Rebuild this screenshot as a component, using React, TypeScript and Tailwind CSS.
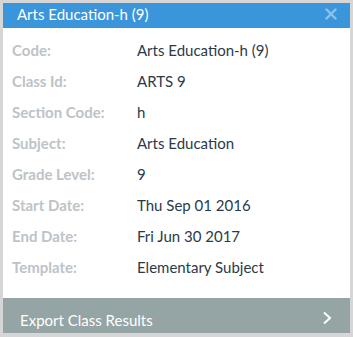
import React from "react";

const rows: [string, string][] = [
  ["Code:", "Arts Education-h (9)"],
  ["Class Id:", "ARTS 9"],
  ["Section Code:", "h"],
  ["Subject:", "Arts Education"],
  ["Grade Level:", "9"],
  ["Start Date:", "Thu Sep 01 2016"],
  ["End Date:", "Fri Jun 30 2017"],
  ["Template:", "Elementary Subject"],
];

export default function App() {
  return (
    <div
      className="w-[353px] h-[337px] bg-[#d6d6d6] pt-[3px] pl-[3px] pr-[3px] pb-[4px]"
      style={{ fontFamily: "Lato, 'Open Sans', sans-serif" }}
    >
      <div className="flex h-full flex-col bg-white">
        {/* Header */}
        <div className="flex h-[25px] items-center justify-between bg-[#3b95db] pl-[14px] pr-[13px]">
          <span className="text-[15px] leading-none text-white -mt-[3px]">Arts Education-h (9)</span>
          <svg width="12" height="12" viewBox="0 0 12 12" className="-mt-[3px]">
            <path d="M1.5 1.5 L10.5 10.5 M10.5 1.5 L1.5 10.5" stroke="#8cc2ec" strokeWidth="2.4" strokeLinecap="round" />
          </svg>
        </div>

        {/* Details */}
        <div className="flex-1 pl-[9px] pt-[7px]">
          {rows.map(([label, value]) => (
            <div key={label} className="flex h-[31px] items-center text-[15px]">
              <span className="w-[125px] font-bold text-[#bdc3c7]">{label}</span>
              <span className="text-[#2b3a4a]">{value}</span>
            </div>
          ))}
        </div>

        {/* Footer */}
        <div className="flex h-[35px] items-center justify-between bg-[#95a5a5] pl-[17px] pr-[18px]">
          <span className="text-[15px] text-white mt-[10px]">Export Class Results</span>
          <svg width="10" height="14" viewBox="0 0 10 14" className="mt-[4px]">
            <path d="M2 1.5 L8 7 L2 12.5" fill="none" stroke="white" strokeWidth="2" />
          </svg>
        </div>
      </div>
    </div>
  );
}
